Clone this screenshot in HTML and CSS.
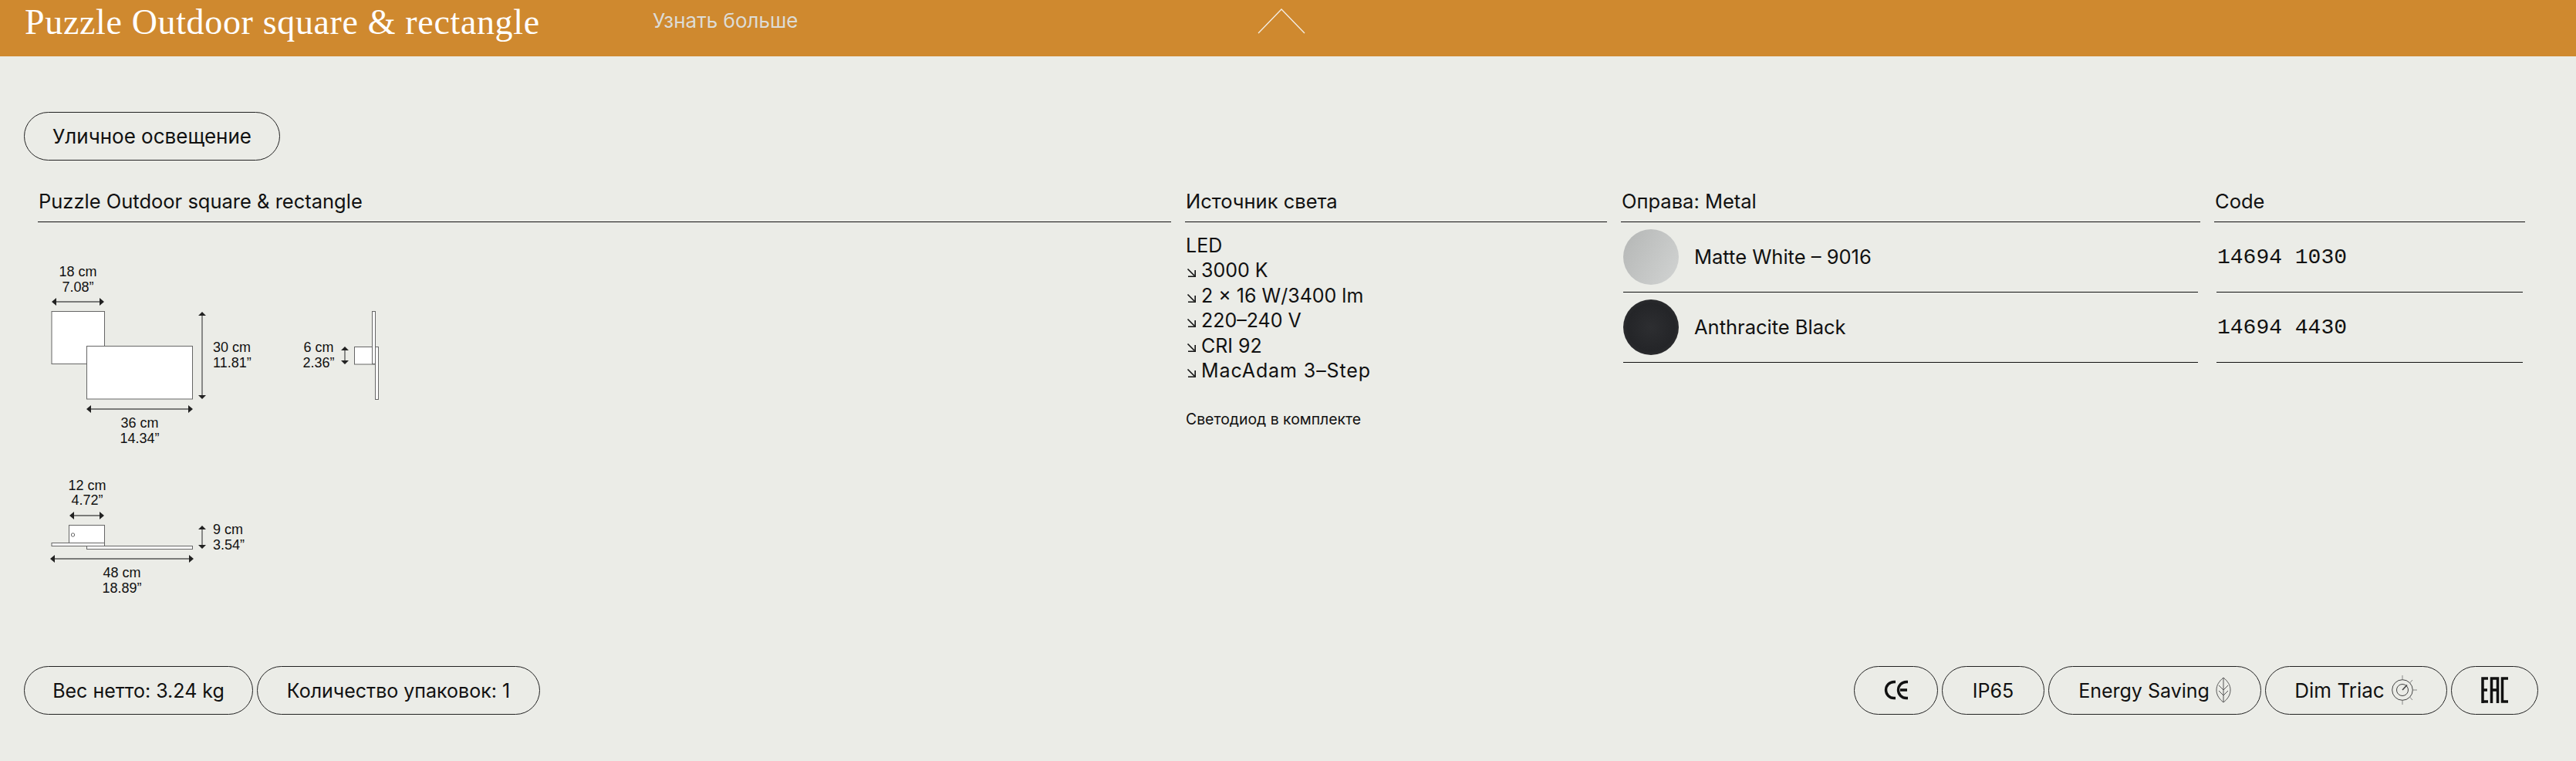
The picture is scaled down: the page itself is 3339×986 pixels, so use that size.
FILE: index.html
```html
<!DOCTYPE html>
<html lang="ru">
<head>
<meta charset="utf-8">
<title>Puzzle Outdoor square &amp; rectangle</title>
<link rel="stylesheet" href="styles.css">
</head>
<body>
<header class="topbar">
  <h1 class="topbar-title">Puzzle Outdoor square &amp; rectangle</h1>
  <a class="topbar-link">Узнать больше</a>
  <svg class="chevron" width="62" height="33" viewBox="0 0 62 33"><path d="M1 32 L31 1 L61 32" fill="none" stroke="#f4efe6" stroke-width="1.3"/></svg>
</header>
<main class="page">
  <div class="top-tags"><span class="pill pill-cat">Уличное освещение</span></div>
  <section class="spec">
    <div class="col">
      <h2 class="col-head col-head-first">Puzzle Outdoor square &amp; rectangle</h2>
      <svg class="drawing" width="480" height="460" viewBox="30 328 480 460">
        <g class="dim">
          <text x="101" y="358">18 cm</text><text x="101" y="378">7.08”</text>
          <text x="181" y="554">36 cm</text><text x="181" y="574">14.34”</text>
          <text class="start" x="276" y="456">30 cm</text><text class="start" x="276" y="476">11.81”</text>
          <text x="413" y="456">6 cm</text><text x="413" y="476">2.36”</text>
          <text x="113" y="635">12 cm</text><text x="113" y="654">4.72”</text>
          <text x="158" y="748">48 cm</text><text x="158" y="768">18.89”</text>
          <text class="start" x="276" y="692">9 cm</text><text class="start" x="276" y="712">3.54”</text>
        </g>
        <rect class="shape" x="67" y="403.5" width="68.5" height="68"/>
        <rect class="shape" x="112.5" y="448.5" width="137" height="68.5"/>
        <rect class="shape" x="459.5" y="449.5" width="31" height="22.5"/>
        <rect class="shape" x="486.5" y="449.5" width="4" height="68"/>
        <rect class="shape" x="482.5" y="403.5" width="4" height="68"/>
        <rect class="shape" x="89.5" y="680.5" width="46" height="23"/>
        <circle class="shape" cx="94.5" cy="693" r="2.2"/>
        <rect class="shape" x="67" y="703.5" width="68.5" height="4"/>
        <rect class="shape" x="112.5" y="707.5" width="137" height="4"/>
        <path class="ln" d="M70 391H132M115 530H247M262 408V513M447 453V468M93 668H132M68 724H248M262 684V707"/>
        <path class="ah" d="M67 391l6-5v10zM135 391l-6-5v10zM112 530l6-5v10zM250 530l-6-5v10zM262 404l5 5h-10zM262 517l5-5h-10zM447 449l5 5h-10zM447 472l5-5h-10zM90 668l6-5v10zM135 668l-6-5v10zM65 724l6-5v10zM251 724l-6-5v10zM262 681l5 5h-10zM262 711l5-5h-10z"/>
      </svg>
    </div>
    <div class="col">
      <h2 class="col-head">Источник света</h2>
      <ul class="source">
        <li>LED</li>
        <li><svg class="arr" width="13" height="13" viewBox="0 0 13 13"><path d="M1.5 1.5 L10 10 M2 11.2 H11.2 V3" fill="none" stroke="#111" stroke-width="1.6"/></svg>3000 K</li>
        <li><svg class="arr" width="13" height="13" viewBox="0 0 13 13"><path d="M1.5 1.5 L10 10 M2 11.2 H11.2 V3" fill="none" stroke="#111" stroke-width="1.6"/></svg>2 × 16 W/3400 lm</li>
        <li><svg class="arr" width="13" height="13" viewBox="0 0 13 13"><path d="M1.5 1.5 L10 10 M2 11.2 H11.2 V3" fill="none" stroke="#111" stroke-width="1.6"/></svg>220–240 V</li>
        <li><svg class="arr" width="13" height="13" viewBox="0 0 13 13"><path d="M1.5 1.5 L10 10 M2 11.2 H11.2 V3" fill="none" stroke="#111" stroke-width="1.6"/></svg>CRI 92</li>
        <li class="source-wide"><svg class="arr" width="13" height="13" viewBox="0 0 13 13"><path d="M1.5 1.5 L10 10 M2 11.2 H11.2 V3" fill="none" stroke="#111" stroke-width="1.6"/></svg>MacAdam 3–Step</li>
      </ul>
      <p class="note">Светодиод в комплекте</p>
    </div>
    <div class="col">
      <h2 class="col-head">Оправа: Metal</h2>
      <div class="rows rows-finish">
        <div class="row"><span class="swatch swatch-white"></span><span class="finish">Matte White – 9016</span></div>
        <div class="row"><span class="swatch swatch-black"></span><span class="finish">Anthracite Black</span></div>
      </div>
    </div>
    <div class="col">
      <h2 class="col-head">Code</h2>
      <div class="rows rows-code">
        <div class="row"><span class="code">14694 1030</span></div>
        <div class="row"><span class="code">14694 4430</span></div>
      </div>
    </div>
  </section>
  <footer class="tags">
    <div class="tag-group">
      <span class="pill pill-weight">Вес нетто: 3.24 kg</span>
      <span class="pill pill-pack">Количество упаковок: 1</span>
    </div>
    <div class="tag-group tag-right">
      <span class="pill pill-ce"><svg class="ic-up" width="32" height="26" viewBox="0 0 32 26"><path d="M15 2.5 H13 A10.5 10.5 0 0 0 13 23.5 H15 M31 2.5 H29 A10.5 10.5 0 0 0 29 23.5 H31 M21 13 H30" fill="none" stroke="#111" stroke-width="3.4"/></svg></span>
      <span class="pill pill-ip">IP65</span>
      <span class="pill pill-energy">Energy Saving<svg class="ic-up" width="20" height="34" viewBox="0 0 20 34"><path d="M10 1 C4 6 1 11 1 17 C1 24 5 29 10 33 C15 29 19 24 19 17 C19 11 16 6 10 1 Z M10 1 V33 M4 11 L10 17 L16 11 M4 18 L10 24 L16 18" fill="none" stroke="#555" stroke-width="1"/></svg></span>
      <span class="pill pill-dim">Dim Triac<svg class="ic-up" width="34" height="38" viewBox="0 0 34 38"><g fill="none" stroke="#444" stroke-width="1"><circle cx="14" cy="19" r="13.3"/><circle cx="14" cy="19" r="7.5"/><path d="M14 19 L20 12.5" stroke-width="1.6"/></g><path d="M14 0V5M14 33V38M27 6L23.5 10M27 32L23.5 28M28 19H33" fill="none" stroke="#888" stroke-width="1"/></svg></span>
      <span class="pill pill-eac"><svg class="ic-up" width="35" height="34" viewBox="0 0 35 34"><path d="M2 34V2H9M2 17H8M2 32H9M13.5 34V2H21.5V34M13.5 17H21.5M35 2H27.5V32H35" fill="none" stroke="#111" stroke-width="3.5"/></svg></span>
    </div>
  </footer>
</main>
</body>
</html>
```
FILE: styles.css
```css
* { box-sizing: border-box; }
html, body { margin: 0; padding: 0; }
body {
  width: 3339px;
  height: 986px;
  overflow: hidden;
  background: #ebece7;
  color: #111;
  font-family: Inter, "Liberation Sans", Arial, sans-serif;
  font-size: 25px;
}
.topbar {
  height: 73px;
  background: #cf892f;
  display: flex;
  align-items: flex-start;
  padding-left: 32px;
  position: relative;
}
.topbar-title {
  margin: 3px 0 0;
  width: 814px;
  font: 400 46px/52px "Liberation Serif", "Times New Roman", serif;
  letter-spacing: 0.65px;
  color: #fff;
}
.topbar-link { color: #dddcd6; font-size: 26px; line-height: 30px; margin-top: 12px; }
.chevron { position: absolute; left: 1630px; top: 11px; }
.page {
  height: 913px;
  padding: 72px 49px 60px 31px;
  display: flex;
  flex-direction: column;
}
.pill {
  display: inline-flex;
  align-items: center;
  justify-content: center;
  height: 63px;
  border: 1px solid #222;
  border-radius: 32px;
  white-space: nowrap;
  font-size: 25px;
}
.top-tags { display: flex; height: 63px; }
.pill-cat { width: 332px; font-size: 26px; }
.spec {
  display: grid;
  grid-template-columns: 1469px 547px 751px 403px;
  gap: 18px;
  margin: 0 0 0 18px;
  padding-top: 38px;
  flex: 1;
  align-items: start;
}
.col-head {
  margin: 0;
  height: 42px;
  border-bottom: 1.5px solid #111;
  font-weight: 400;
  font-size: 25.5px;
  line-height: 30px;
  padding-left: 1px;
}
.drawing { display: block; margin-top: 40px; margin-left: -19px; }
.dim text { font-family: "Liberation Sans", Arial, sans-serif; font-size: 18px; text-anchor: middle; fill: #111; }
.dim text.start { text-anchor: start; }
.shape { fill: #fff; stroke: #666; stroke-width: 1; }
.ln { stroke: #555; stroke-width: 1.3; fill: none; }
.ah { fill: #222; }
.source { list-style: none; margin: 14px 0 0; padding: 0 0 0 1px; font-size: 25px; line-height: 32.4px; }
.source li { display: flex; align-items: center; }
.source .source-wide { letter-spacing: 0.9px; }
.arr { margin: 6px 6px 0 1px; flex: none; }
.note { margin: 35px 0 0 1px; font-size: 19.4px; line-height: 24px; }
.rows-finish { padding: 0 3px; }
.rows-code { padding: 0 3px; }
.row { height: 91px; display: flex; align-items: center; border-bottom: 1.5px solid #111; }
.swatch { width: 72px; height: 72px; border-radius: 50%; flex: none; }
.swatch-white { background: linear-gradient(120deg, #b4b6b5, #d2d4d3); }
.swatch-black { background: radial-gradient(circle at 50% 50%, #2d2e31, #242528 60%, #3a3a3c); }
.finish { margin: -1px 0 0 20px; font-size: 25.5px; }
.code { margin: 2px 0 0 1px; font: 400 28px/32px "Liberation Mono", "Courier New", monospace; }
.tags { display: flex; justify-content: space-between; }
.tag-group { display: flex; gap: 5px; }
.pill-weight { width: 297px; }
.pill-pack { width: 367px; }
.pill-ce { width: 109px; }
.pill-ip { width: 133px; }
.pill-energy { width: 276px; gap: 8px; }
.pill-dim { width: 236px; gap: 9px; font-size: 26px; }
.pill-eac { width: 113px; }
.ic-up { margin-bottom: 2px; }
```
